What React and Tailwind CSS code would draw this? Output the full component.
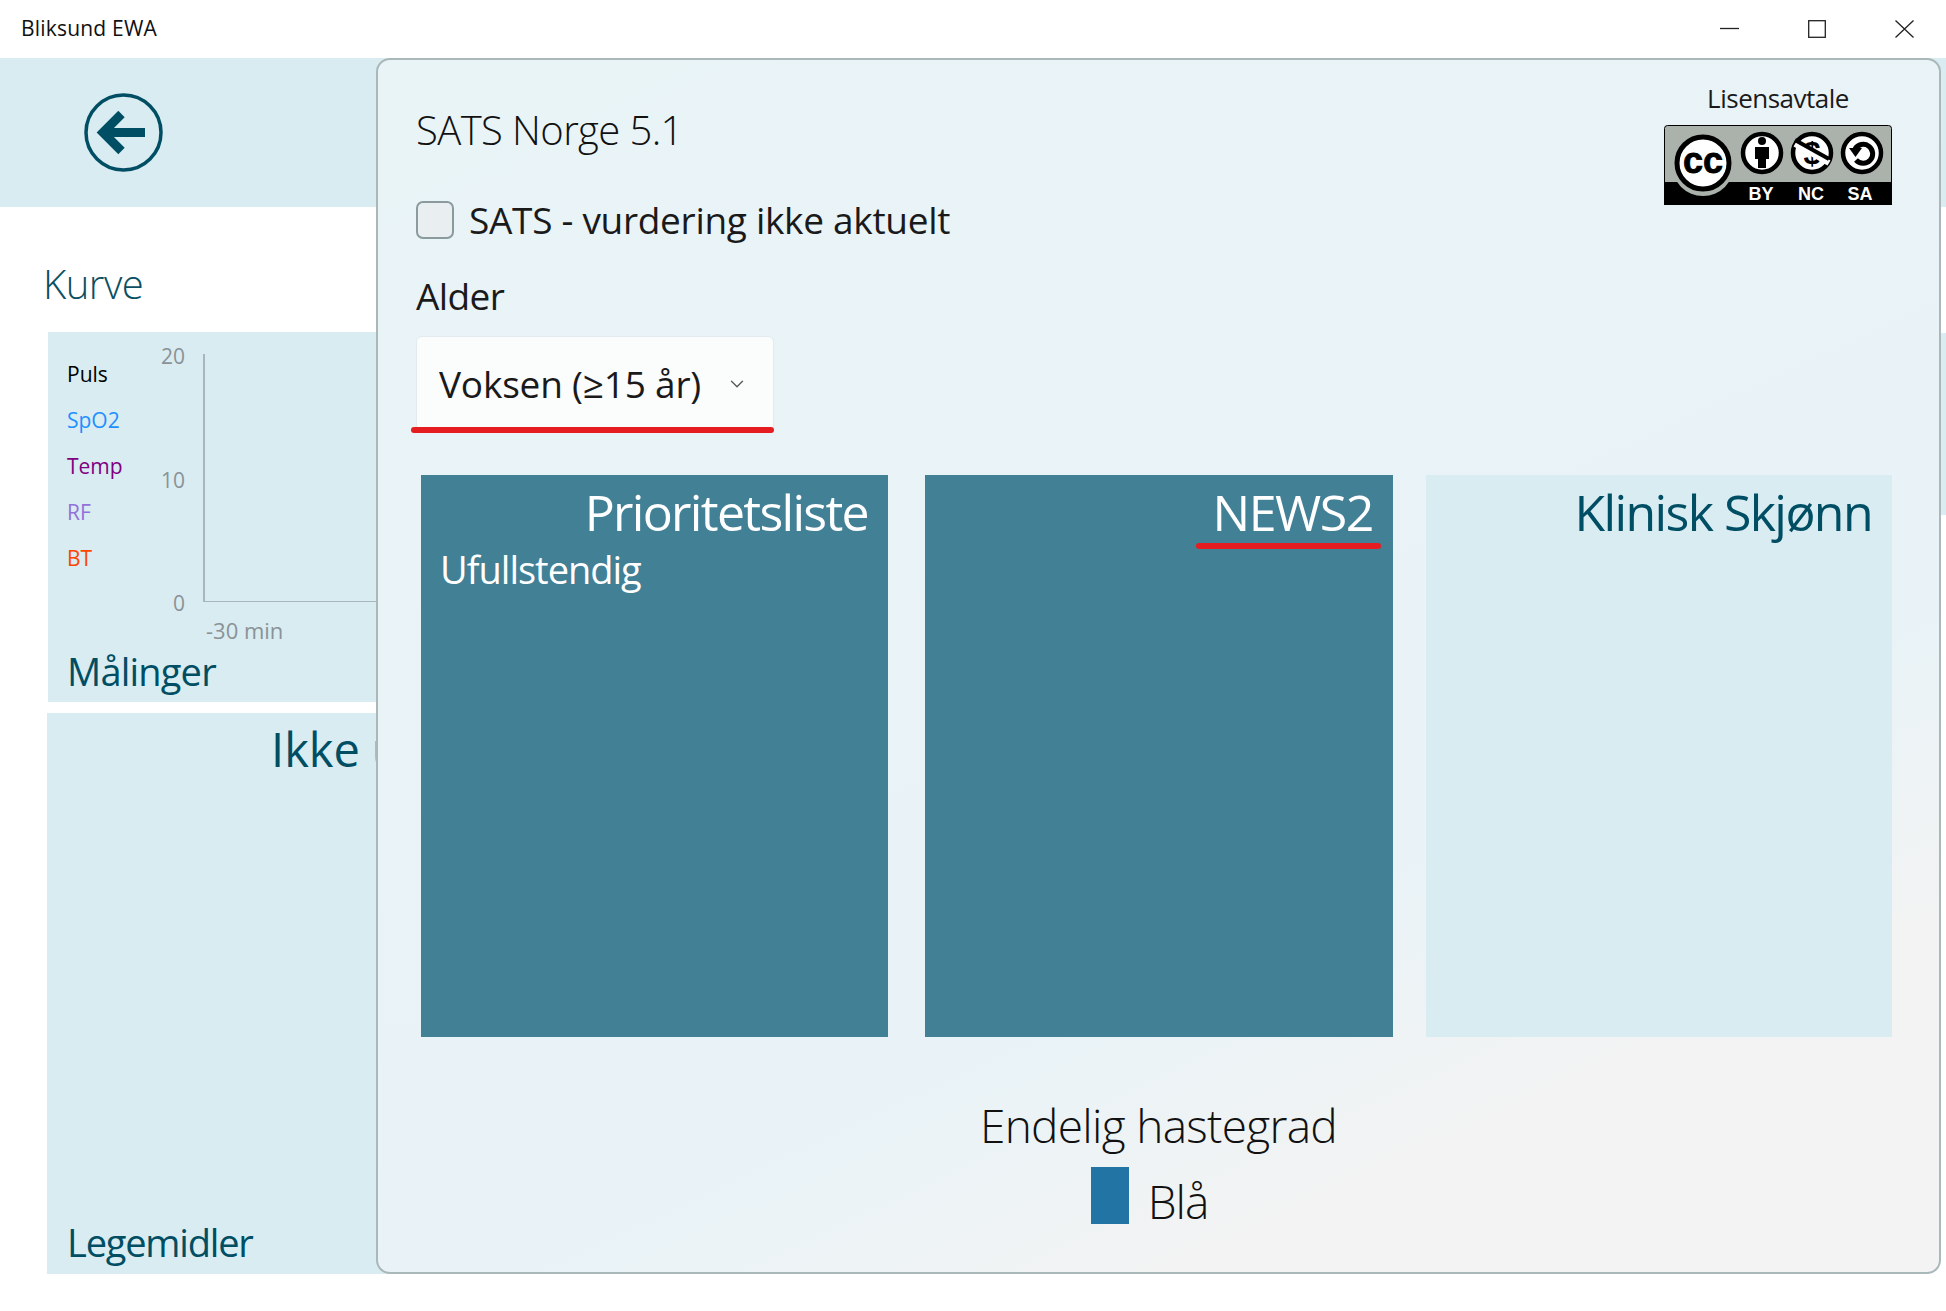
import React from "react";
import { ChevronDown } from "lucide-react";

function BackIcon() {
  return (
    <svg width="80" height="80" viewBox="0 0 80 80" fill="none">
      <circle cx="39.5" cy="39.5" r="37.5" stroke="#004e64" strokeWidth="3.5" />
      <path d="M20 39.5 H61" stroke="#004e64" strokeWidth="9" />
      <path d="M37.5 21 L19 39.5 L37.5 58" stroke="#004e64" strokeWidth="9" />
    </svg>
  );
}

function WindowButtons() {
  return (
    <div className="flex items-center">
      <svg width="19" height="20" viewBox="0 0 19 20" className="mr-[69px]">
        <path d="M0 9.5 H19" stroke="#222" strokeWidth="1.3" />
      </svg>
      <svg width="18" height="18" viewBox="0 0 18 18" className="mr-[69px]">
        <rect x="0.7" y="0.7" width="16.6" height="16.6" fill="none" stroke="#222" strokeWidth="1.3" />
      </svg>
      <svg width="19" height="18" viewBox="0 0 19 18" className="mr-[32px]">
        <path d="M0.5 0.5 L18.5 17.5 M18.5 0.5 L0.5 17.5" stroke="#222" strokeWidth="1.3" />
      </svg>
    </div>
  );
}

// cc by-nc-sa merke
function LicenseBadge() {
  const ring = (cx) => <circle cx={cx} cy="28" r="19" fill="#fff" stroke="#000" strokeWidth="4.5" />;
  return (
    <svg width="228" height="80" viewBox="0 0 228 80">
      <rect x="0.5" y="0.5" width="227" height="79" rx="3" fill="#aab2ab" stroke="#000" />
      <path d="M0 57 H228 V80 H0 Z" fill="#000" />
      <circle cx="39" cy="40" r="31" fill="#aab2ab" />
      <circle cx="39" cy="38" r="26" fill="#fff" stroke="#000" strokeWidth="5" />
      <text x="39" y="48" textAnchor="middle" fontFamily="Liberation Sans" fontWeight="700" fontSize="36" fill="#000" stroke="#000" strokeWidth="0.8">cc</text>

      {ring(98)}
      <circle cx="98" cy="16" r="4" fill="#000" />
      <path d="M91 22 H105 V34 H102 V43 H94 V34 H91 Z" fill="#000" />

      {ring(148)}
      <text x="148" y="39" textAnchor="middle" fontFamily="Liberation Sans" fontWeight="700" fontSize="31" fill="#000">$</text>
      <path d="M131 19 L165 38" stroke="#fff" strokeWidth="6" />
      <path d="M131 15 L165 34" stroke="#000" strokeWidth="4" />

      {ring(198)}
      <path d="M191 24 A9.5 9.5 0 1 1 192 35" fill="none" stroke="#000" strokeWidth="5" />
      <path d="M185 23 H198 L191.5 32 Z" fill="#000" />

      <g fontFamily="Liberation Sans" fontWeight="700" fontSize="18" fill="#fff" textAnchor="middle">
        <text x="97" y="75">BY</text>
        <text x="147" y="75">NC</text>
        <text x="196" y="75">SA</text>
      </g>
    </svg>
  );
}

function Chart() {
  return (
    <div className="flex">
      <div className="w-[87px] shrink-0 pt-[7px] text-[21px]">
        <div className="h-[46px] leading-[46px] text-black">Puls</div>
        <div className="h-[46px] leading-[46px] text-[#1e90ff]">SpO2</div>
        <div className="h-[46px] leading-[46px] text-[#800080]">Temp</div>
        <div className="h-[46px] leading-[46px] text-[#9370db]">RF</div>
        <div className="h-[46px] leading-[46px] text-[#ff4500]">BT</div>
      </div>
      <div className="w-[31px] shrink-0 h-[271px] flex flex-col justify-between items-end text-[21px] leading-[24px] text-[#8b9296]">
        <span>20</span>
        <span>10</span>
        <span>0</span>
      </div>
      <div className="shrink-0 ml-[18px] mt-[10px] w-[300px] h-[248px] border-l-2 border-b border-[#a9b6bb]" />
    </div>
  );
}

export default function App() {
  return (
    <div className="relative w-[1946px] h-[1311px] overflow-hidden bg-white font-['Open_Sans',sans-serif]">
      <div className="h-[58px] flex items-center justify-between pl-[21px]">
        <span className="text-[21px] tracking-[0.2px] text-[#111]">Bliksund EWA</span>
        <WindowButtons />
      </div>

      <div className="h-[149px] flex items-center pl-[84px] bg-[#d8ecf1]">
        <BackIcon />
      </div>

      <div className="h-[125px] pl-[43px] pt-[48px]">
        <span className="block text-[40px] leading-[58px] font-light tracking-[-0.5px] text-[#0b4f63]">Kurve</span>
      </div>

      <div className="flex pl-[48px] h-[370px] gap-[10px]">
        <div className="w-[467px] bg-[#d8ecf1] pl-[19px] pt-[12px] text-[#004e64]">
          <Chart />
          <div className="ml-[139px] mt-[3px] text-[22px] leading-[24px] text-[#8b9296]">-30 min</div>
          <div className="mt-[6px] text-[38px] leading-[46px] tracking-[-0.8px]">Målinger</div>
        </div>
        <div className="flex-1 h-[182px] mt-[1px] bg-[#d8ecf1]" />
      </div>

      <div className="flex pl-[47px] mt-[11px] h-[561px] gap-[10px]">
        <div className="w-[467px] flex flex-col justify-between bg-[#d8ecf1] text-[#004e64]">
          <div className="pl-[224px] mt-[6px] text-[47px] leading-[60px] whitespace-nowrap">Ikke utfylt</div>
          <div className="pl-[20px] pb-[9px] text-[38px] leading-[46px] tracking-[-1.2px]">Legemidler</div>
        </div>
        <div className="w-[468px] bg-[#d8ecf1]" />
      </div>

      <div className="absolute left-[376px] top-[58px] w-[1565px] h-[1216px] rounded-[14px] border-2 border-[#aab8ba] bg-[linear-gradient(155deg,#e9f4f7_0%,#e9f3f7_66%,#f3f3f3_82%)]">
        <div className="flex justify-between pl-[38px] pr-[47px]">
          <div className="pt-[44px]">
            <div className="text-[40px] leading-[52px] font-light tracking-[-0.6px] text-[#111]">SATS Norge 5.1</div>
            <div className="mt-[40px] h-[48px] flex items-center gap-[15px]">
              <div className="w-[38px] h-[38px] rounded-[7px] border-2 border-[#8b9a9e] bg-[#e9eff1]" />
              <span className="text-[37px] tracking-[-0.3px] text-[#1a1a1a]">SATS - vurdering ikke aktuelt</span>
            </div>
            <div className="mt-[30px] text-[37px] leading-[44px] tracking-[-0.6px] text-[#1a1a1a]">Alder</div>
            <div className="relative mt-[18px] w-[358px] h-[94px] flex items-center justify-between pl-[22px] pr-[25px] pt-[2px] rounded-[6px] border border-[#e2ecee] bg-[#fbfdfd]">
              <span className="text-[37px] tracking-[-0.2px] text-[#1a1a1a]">Voksen (≥15 år)</span>
              <ChevronDown size={22} strokeWidth={1.4} className="text-[#555]" />
              <div className="absolute -left-[6px] -right-[1px] top-[90px] h-[6px] rounded-[3px] bg-[#e51c20]" />
            </div>
          </div>
          <div className="pt-[24px] flex flex-col items-center">
            <div className="text-[26px] leading-[28px] tracking-[-0.5px] text-[#1a1a1a]">Lisensavtale</div>
            <div className="mt-[13px] h-[80px]">
              <LicenseBadge />
            </div>
          </div>
        </div>

        <div className="flex mt-[45px] pl-[43px]">
          <div className="w-[467px] h-[562px] bg-[#428096] text-white">
            <div className="pr-[20px] pt-[7px] text-right text-[50px] leading-[60px] tracking-[-1.7px]">Prioritetsliste</div>
            <div className="pl-[19px] mt-[2px] text-[38px] leading-[50px] tracking-[-1px]">Ufullstendig</div>
          </div>
          <div className="relative ml-[37px] w-[468px] h-[562px] bg-[#428096] text-white">
            <div className="pr-[20px] pt-[7px] text-right text-[50px] leading-[60px] tracking-[-1.4px]">NEWS2</div>
            <div className="absolute left-[271px] top-[68px] w-[185px] h-[6px] rounded-[3px] bg-[#e51c20]" />
          </div>
          <div className="ml-[33px] w-[466px] h-[562px] bg-[#d8ecf1] text-[#004e64]">
            <div className="pr-[20px] pt-[7px] text-right text-[50px] leading-[60px] tracking-[-1.6px]">Klinisk Skjønn</div>
          </div>
        </div>

        <div className="flex flex-col items-center pl-[35px] mt-[58px] w-[1526px]">
          <div className="text-[46px] leading-[60px] font-light tracking-[-0.7px] text-[#111]">Endelig hastegrad</div>
          <div className="flex mt-[12px] gap-[19px] pr-[18px]">
            <div className="w-[38px] h-[57px] bg-[#2274a5]" />
            <span className="pt-[4px] text-[46px] leading-[60px] font-light tracking-[-1px] text-[#111]">Blå</span>
          </div>
        </div>
      </div>
    </div>
  );
}
